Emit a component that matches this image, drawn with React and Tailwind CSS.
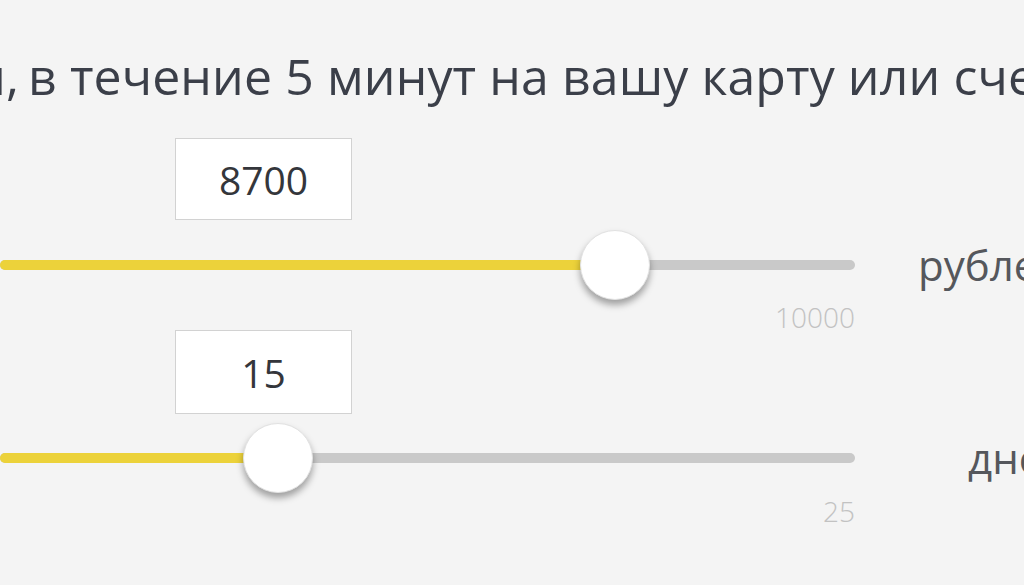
import React, { useState } from 'react'

function RangeRow({ value, max, left, label, labelGap, boxH, gapTop, gapBottom }) {
    // left = thumb offset inside the 855px track area
    return (
        <div>
            <div className={`ml-[175px] flex w-[177px] items-center justify-center border border-[#d2d2d2] bg-white ${boxH}`}>
                <span className="text-[39px] leading-none text-[#34363b]">{value}</span>
            </div>

            <div className={`flex items-center ${gapTop}`}>
                <div className="relative h-[70px] w-[855px] shrink-0">
                    <div className="absolute left-0 right-0 top-[30px] h-[10px] rounded-full bg-[#c9c9c9]" />
                    <div
                        className="absolute left-0 top-[30px] h-[10px] rounded-l-full bg-[#ecd23a]"
                        style={{ width: left + 35 }}
                    />
                    <div
                        className="absolute top-0 h-[70px] w-[70px] rounded-full border border-[#e2e2e2] bg-white shadow-[0_5px_7px_rgba(0,0,0,0.35)]"
                        style={{ left }}
                    />
                </div>
                <span className={`whitespace-nowrap text-[42px] leading-none text-[#55575c] ${labelGap}`}>{label}</span>
            </div>

            <div className={`flex w-[855px] justify-end ${gapBottom}`}>
                <span className="text-[28px] font-light leading-[24px] text-[#c2c2c2]">{max}</span>
            </div>
        </div>
    )
}

export default function App() {
    const [sum] = useState(8700)
    const [days] = useState(15)

    return (
        <div className="h-[585px] w-[1024px] overflow-hidden bg-[#f4f4f4] font-['Open_Sans',sans-serif]">
            <h2 className="flex whitespace-nowrap pt-[52px] text-[50px] font-medium leading-[48px] tracking-[0.1px] text-[#3b3f49]">
                <span className="flex w-[19px] shrink-0 justify-end">Получите деньги онлайн,</span>
                <span className="ml-[9px]">в течение 5 минут на вашу карту или счет</span>
            </h2>

            <div className="mt-[38px]">
                <RangeRow
                    value={sum}
                    max="10000"
                    left={580}
                    label="рублей"
                    labelGap="ml-[63px]"
                    boxH="h-[82px]"
                    gapTop="mt-[10px]"
                    gapBottom="mt-[5px]"
                />
                <div className="mt-[1px]">
                    <RangeRow
                        value={days}
                        max="25"
                        left={243}
                        label="дней"
                        labelGap="ml-[113px]"
                        boxH="h-[84px]"
                        gapTop="mt-[9px]"
                        gapBottom="mt-[6px]"
                    />
                </div>
            </div>
        </div>
    )
}
